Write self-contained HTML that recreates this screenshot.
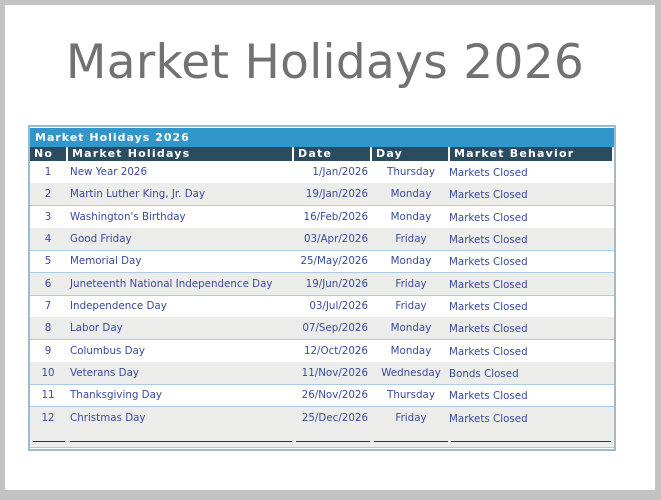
<!DOCTYPE html>
<html><head><style>
html,body{margin:0;padding:0;}
body{width:661px;height:500px;background:#c3c3c3;position:relative;overflow:hidden;font-family:"DejaVu Sans","Liberation Sans",sans-serif;}
#page{position:absolute;left:5px;top:5px;width:650px;height:485px;background:#fff;}
h1{position:absolute;left:0;width:640px;top:30px;margin:0;text-align:center;font:47px "DejaVu Sans","Liberation Sans",sans-serif;color:#727272;letter-spacing:0.3px;}
#tbl{position:absolute;left:28px;top:125px;width:584px;height:322px;border:2px solid #9dbbd0;background:#fff;}
.title{position:absolute;left:0;top:1px;width:584px;height:19px;background:#3197cb;color:#fff;font:bold 11px "DejaVu Sans",sans-serif;letter-spacing:1px;line-height:19px;padding-left:5px;box-sizing:border-box;}
.hdr{position:absolute;top:20px;height:14px;background:#2b4c5f;color:#fff;font:bold 11px "DejaVu Sans",sans-serif;letter-spacing:1.2px;line-height:14px;padding-left:4px;box-sizing:border-box;border-left:2px solid #fff;}
.row{position:absolute;left:0;width:584px;height:22px;border-bottom:1px solid #aacbe6;font-size:10.3px;color:#3a4a9c;line-height:22px;}
.row.g{background:#ececea;}
.row span{position:absolute;top:0;}
.c1{left:0;width:36px;text-align:center;}
.c2{left:40px;}
.c3{left:250px;width:88px;text-align:right;}
.c4{left:342px;width:78px;text-align:center;}
.c5{left:419px;top:1px!important;}
.ul{position:absolute;top:314px;height:1px;background:#333;}
</style></head><body>
<div id="page">
<h1>Market Holidays 2026</h1>
</div>
<div id="tbl">
<div class="title">Market Holidays 2026</div>
<div class="hdr" style="left:0;width:36px;border-left:none">No</div>
<div class="hdr" style="left:36px;width:226px">Market Holidays</div>
<div class="hdr" style="left:262px;width:78px">Date</div>
<div class="hdr" style="left:340px;width:78px">Day</div>
<div class="hdr" style="left:418px;width:164px">Market Behavior</div>

<div class="row" style="top:34px"><span class="c1">1</span><span class="c2">New Year 2026</span><span class="c3">1/Jan/2026</span><span class="c4">Thursday</span><span class="c5">Markets Closed</span></div>
<div class="row g" style="top:56px"><span class="c1">2</span><span class="c2">Martin Luther King, Jr. Day</span><span class="c3">19/Jan/2026</span><span class="c4">Monday</span><span class="c5">Markets Closed</span></div>
<div class="row" style="top:79px"><span class="c1">3</span><span class="c2">Washington's Birthday</span><span class="c3">16/Feb/2026</span><span class="c4">Monday</span><span class="c5">Markets Closed</span></div>
<div class="row g" style="top:101px"><span class="c1">4</span><span class="c2">Good Friday</span><span class="c3">03/Apr/2026</span><span class="c4">Friday</span><span class="c5">Markets Closed</span></div>
<div class="row" style="top:123px"><span class="c1">5</span><span class="c2">Memorial Day</span><span class="c3">25/May/2026</span><span class="c4">Monday</span><span class="c5">Markets Closed</span></div>
<div class="row g" style="top:146px"><span class="c1">6</span><span class="c2">Juneteenth National Independence Day</span><span class="c3">19/Jun/2026</span><span class="c4">Friday</span><span class="c5">Markets Closed</span></div>
<div class="row" style="top:168px"><span class="c1">7</span><span class="c2">Independence Day</span><span class="c3">03/Jul/2026</span><span class="c4">Friday</span><span class="c5">Markets Closed</span></div>
<div class="row g" style="top:190px"><span class="c1">8</span><span class="c2">Labor Day</span><span class="c3">07/Sep/2026</span><span class="c4">Monday</span><span class="c5">Markets Closed</span></div>
<div class="row" style="top:213px"><span class="c1">9</span><span class="c2">Columbus Day</span><span class="c3">12/Oct/2026</span><span class="c4">Monday</span><span class="c5">Markets Closed</span></div>
<div class="row g" style="top:235px"><span class="c1">10</span><span class="c2">Veterans Day</span><span class="c3">11/Nov/2026</span><span class="c4">Wednesday</span><span class="c5">Bonds Closed</span></div>
<div class="row" style="top:257px"><span class="c1">11</span><span class="c2">Thanksgiving Day</span><span class="c3">26/Nov/2026</span><span class="c4">Thursday</span><span class="c5">Markets Closed</span></div>
<div class="row g" style="top:280px"><span class="c1">12</span><span class="c2">Christmas Day</span><span class="c3">25/Dec/2026</span><span class="c4">Friday</span><span class="c5">Markets Closed</span></div>
<div class="row g" style="top:302px;height:18px"></div>
<div class="ul" style="left:3px;width:32px"></div>
<div class="ul" style="left:40px;width:222px"></div>
<div class="ul" style="left:266px;width:74px"></div>
<div class="ul" style="left:344px;width:74px"></div>
<div class="ul" style="left:421px;width:160px"></div>
</div>
</body></html>
